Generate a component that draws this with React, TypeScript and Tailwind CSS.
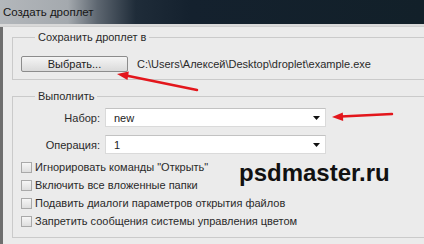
import React from "react";

const font = { fontFamily: '"Liberation Sans", "DejaVu Sans", sans-serif' };

function Caret() {
  return (
    <svg width="7" height="4" viewBox="0 0 7 4" className="shrink-0">
      <path d="M0 0h7L3.5 4z" fill="#111" />
    </svg>
  );
}

function Select({ value }: { value: string }) {
  return (
    <div className="h-[19px] w-[221px] flex items-center justify-between bg-white border border-[#dadada] border-t-[#c2c2c2] pl-[8px] pr-[5px] text-[#222]">
      <span>{value}</span>
      <Caret />
    </div>
  );
}

function Check({ label }: { label: string }) {
  return (
    <div className="h-[18px] flex items-center gap-[3px]">
      <span className="w-[11px] h-[11px] border border-[#a9a9a9] bg-gradient-to-b from-[#f6f6f6] to-[#dedede]" />
      <span className="text-[#2a2a2a]">{label}</span>
    </div>
  );
}

export default function App() {
  return (
    <div
      style={font}
      className="relative w-[424px] h-[244px] overflow-hidden bg-[#ebebeb] text-[11px] leading-[14px] text-[#222]"
    >
      <div className="h-[24px] flex items-center pl-[3px] text-[11.5px] text-[#161616] bg-[linear-gradient(90deg,#b3b7bb_0%,#a4a9ae_16%,#5d6670_23%,#1f2c39_32%,#14212e_45%,#122029_100%)]">
        Создать дроплет
      </div>
      <div className="h-[3px] bg-[#d9d9d9] border-b border-[#cfcfcf]" />

      <div className="flex h-full">
        <div className="w-[3px] bg-[#6e6e6e] shrink-0" />
        <div className="pl-[9px]">
          <fieldset className="mt-[3px] w-[440px] border border-[#cacaca] pl-[8px] pt-[12px] pb-[7px]">
            <legend className="ml-[14px] px-[3px] text-[#2a2a2a]">Сохранить дроплет в</legend>
            <div className="flex items-center gap-[9px]">
              <button className="w-[107px] h-[16px] rounded-[2px] border border-[#8c8c8c] bg-gradient-to-b from-[#f5f5f5] to-[#dadada] text-[#222] leading-none">
                Выбрать...
              </button>
              <span className="text-[#2a2a2a]">C:\Users\Алексей\Desktop\droplet\example.exe</span>
            </div>
          </fieldset>

          <fieldset className="mt-[9px] w-[440px] border border-[#cacaca] pl-[8px] pt-[5px] pb-[7px]">
            <legend className="ml-[14px] px-[3px] text-[#2a2a2a]">Выполнить</legend>
            <div className="grid grid-cols-[87px_221px] gap-x-[5px] gap-y-[8px] items-center -ml-[8px]">
              <span className="text-right text-[#2a2a2a]">Набор:</span>
              <Select value="new" />
              <span className="text-right text-[#2a2a2a]">Операция:</span>
              <Select value="1" />
            </div>
            <div className="mt-[4px] flex flex-col">
              <Check label={'Игнорировать команды "Открыть"'} />
              <Check label="Включить все вложенные папки" />
              <Check label="Подавить диалоги параметров открытия файлов" />
              <Check label="Запретить сообщения системы управления цветом" />
            </div>
          </fieldset>
        </div>
      </div>

      <div className="absolute left-[239px] top-[159px] text-[24px] font-bold text-[#111] leading-[28px]">
        psdmaster.ru
      </div>

      <svg className="absolute inset-0 pointer-events-none" width="424" height="244" viewBox="0 0 424 244">
        <line x1="126" y1="75.6" x2="197" y2="90" stroke="#e3161c" strokeWidth="2.5" strokeLinecap="round" />
        <polygon points="117,74 127.5,80 128.8,71.6" fill="#e3161c" />
        <line x1="341" y1="116.6" x2="392" y2="114" stroke="#e3161c" strokeWidth="2.5" strokeLinecap="round" />
        <polygon points="332,117 343.2,121 342.8,112.4" fill="#e3161c" />
      </svg>
    </div>
  );
}
